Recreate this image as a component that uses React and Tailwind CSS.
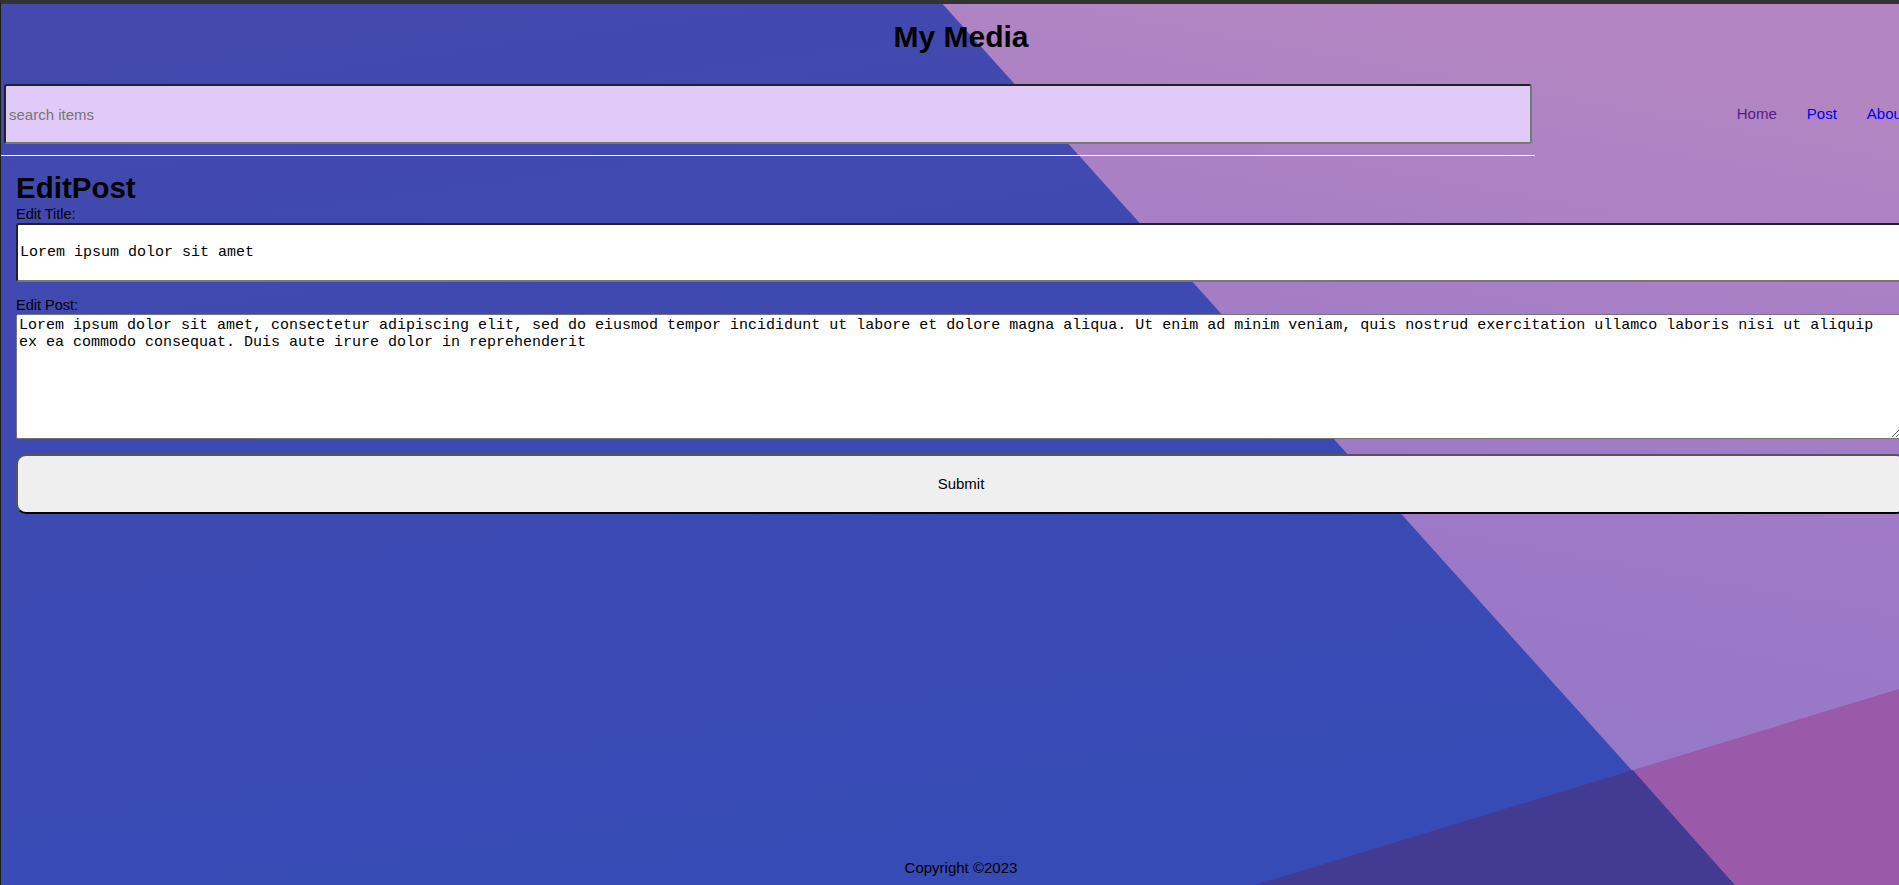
import React from 'react';

const sans = "font-['Liberation_Sans',Arial,sans-serif]";
const mono = "font-['Liberation_Mono','Courier_New',monospace]";

const postText =
  'Lorem ipsum dolor sit amet, consectetur adipiscing elit, sed do eiusmod tempor incididunt ut labore et dolore magna aliqua. Ut enim ad minim veniam, quis nostrud exercitation ullamco laboris nisi ut aliquip ex ea commodo consequat. Duis aute irure dolor in reprehenderit';

// wallpaper behind the page
function Backdrop() {
  return (
    <svg
      className="absolute inset-0 w-full h-full"
      viewBox="0 0 1898 881"
      preserveAspectRatio="none"
    >
      <defs>
        <linearGradient id="blue" x1="0" y1="0" x2="0.3" y2="1">
          <stop offset="0" stopColor="#4449ad" />
          <stop offset="1" stopColor="#374bb6" />
        </linearGradient>
        <linearGradient id="lav" x1="0.4" y1="0" x2="0.2" y2="1">
          <stop offset="0" stopColor="#b386c2" />
          <stop offset="0.5" stopColor="#9e79c7" />
          <stop offset="1" stopColor="#9077c9" />
        </linearGradient>
      </defs>
      <rect x="0" y="0" width="1898" height="881" fill="url(#blue)" />
      <polygon points="938,-4 1898,-4 1898,881 1734,881" fill="url(#lav)" />
      <polygon points="1254,881 1632,766 1734,881" fill="#433a91" />
      <polygon points="1632,766 1898,685 1898,881 1734,881" fill="#9b59a9" />
    </svg>
  );
}

function Header() {
  return (
    <header>
      <h1 className="mt-[16px] text-center text-[30px] leading-[34px] font-bold text-black">
        My Media
      </h1>
      <div className="flex items-center justify-between">
        <div className="w-[1534px] pt-[30px] pb-[11px] pl-[3px] pr-[3px] border-b border-white">
          <input
            type="text"
            placeholder="search items"
            className={`w-full h-[60px] px-[3px] bg-[#e0caf7] rounded-[3px] border-2 border-solid border-t-[#222] border-l-[#222] border-r-[#777] border-b-[#777] text-[15px] placeholder:text-[#757575] outline-none ${sans}`}
          />
        </div>
        <nav className="flex text-[15px] pt-[18px]">
          <a href="#" className="px-[15px] text-[#551a8b]">Home</a>
          <a href="#" className="px-[15px] text-[#0000ee]">Post</a>
          <a href="#" className="px-[15px] text-[#0000ee]">About</a>
        </nav>
      </div>
    </header>
  );
}

function EditPost() {
  return (
    <main className="flex-1 px-[15px] pt-[15px]">
      <h2 className="text-[29.5px] leading-[34px] font-bold text-black">EditPost</h2>
      <label className="block text-[14.5px] leading-[18px] text-black">Edit Title:</label>
      <input
        type="text"
        defaultValue="Lorem ipsum dolor sit amet"
        className={`block w-full h-[59px] px-[2px] bg-white rounded-[3px] border-2 border-solid border-t-[#222] border-l-[#222] border-r-[#777] border-b-[#777] text-[15px] text-black outline-none ${mono}`}
      />
      <label className="block mt-[15px] text-[14.5px] leading-[17px] text-black">Edit Post:</label>
      <textarea
        defaultValue={postText}
        className={`block w-[1885px] h-[125px] p-[2px] bg-white rounded-[2px] border border-[#767676] text-[15px] leading-[17px] text-black outline-none ${mono}`}
      />
      <button
        type="button"
        className="block w-full h-[60px] mt-[15px] bg-[#efefef] rounded-[10px] border-2 border-solid border-t-[#555] border-l-[#555] border-r-black border-b-black text-[15px] text-black"
      >
        Submit
      </button>
    </main>
  );
}

export default function App() {
  return (
    <div className={`relative w-screen h-screen overflow-hidden border-t-4 border-t-[#333] border-l border-l-[#1c1c1c] ${sans}`}>
      <Backdrop />
      <div className="relative flex flex-col w-[1920px] h-full">
        <Header />
        <EditPost />
        <footer className="pb-[8px] text-center text-[15px] leading-[18px] text-black">
          Copyright ©2023
        </footer>
      </div>
    </div>
  );
}
